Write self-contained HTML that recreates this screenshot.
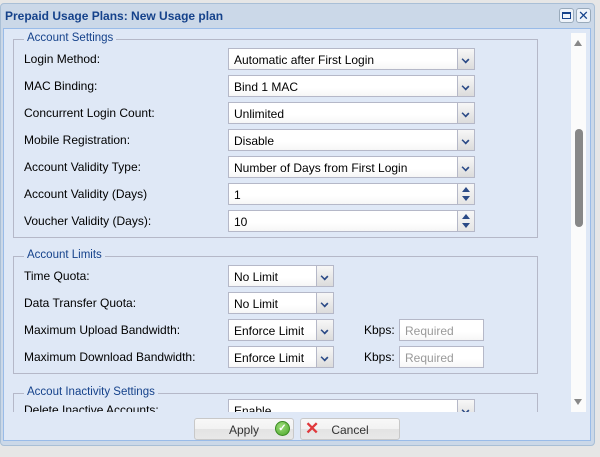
<!DOCTYPE html>
<html><head><style>
*{margin:0;padding:0;box-sizing:border-box}
body{width:600px;height:457px;background:#e6e6e6;font-family:"Liberation Sans",Tahoma,sans-serif;font-size:12px;position:relative;overflow:hidden}
.a{position:absolute}
.win{left:0;top:3px;width:595px;height:443px;background:#cbd8e8;border:1px solid #a9bfd6;border-radius:4px}
.title{left:5px;top:9px;font-weight:bold;color:#15428b;font-size:12px}
.body{left:3px;top:28px;width:588px;height:413px;background:#dfe8f6;border:1px solid #99bbe8}
.fs{border:1px solid #b5b8c8}
.lg{background:#dfe8f6;color:#15428b;padding:0 3px;font-size:11.5px}
.lbl{color:#000;font-size:12px}
.f{height:22px;background:linear-gradient(#fff,#fff 60%,#f6f6f6);border:1px solid #b5b8c8;padding:4px 5px 0;font-size:12px;color:#000}
.tr{position:absolute;right:0;top:0;width:17px;height:20px;background:linear-gradient(#f7f7f7,#dcdcdc);border-left:1px solid #b5b8c8}
.tr:after{content:"";position:absolute;left:4px;top:7px;width:5px;height:5px;border-right:2px solid #2b4a86;border-bottom:2px solid #2b4a86;transform:rotate(45deg) scale(.85,.75)}
.sp{position:absolute;right:0;top:0;width:17px;height:20px;background:linear-gradient(#f7f7f7,#e5e5e5);border-left:1px solid #b5b8c8}
.sp i{position:absolute;left:4px;width:0;height:0;border-left:4px solid transparent;border-right:4px solid transparent}
.ph{color:#999}
.btn{top:418px;height:22px;border:1px solid #c8c8c8;border-radius:3px;background:linear-gradient(#f8f8f8,#f2f2f2 50%,#e3e3e3 51%,#e8e8e8);color:#333;text-align:center;padding-top:4px}
</style></head><body>
<div class="a win"></div>
<div class="a title">Prepaid Usage Plans: New Usage plan</div>
<div class="a" style="left:559px;top:8px;width:15px;height:15px;border:1px solid #9ab;background:#eef3fa;border-radius:3px"><div class="a" style="left:2px;top:3px;width:9px;height:7px;border:1px solid #15428b;border-top-width:2px"></div></div>
<div class="a" style="left:576px;top:8px;width:15px;height:15px;border:1px solid #9ab;background:#eef3fa;border-radius:3px;color:#15428b;font-size:13px;line-height:13px;text-align:center">✕</div>
<div class="a body"></div>
<!-- scrollbar -->
<div class="a" style="left:571px;top:33px;width:15px;height:379px;background:#fbfbfb"></div>
<div class="a" style="left:574px;top:40px;width:0;height:0;border-left:4px solid transparent;border-right:4px solid transparent;border-bottom:6px solid #888"></div>
<div class="a" style="left:575px;top:129px;width:8px;height:98px;background:#888;border-radius:4px"></div>
<div class="a" style="left:574px;top:399px;width:0;height:0;border-left:4px solid transparent;border-right:4px solid transparent;border-top:6px solid #888"></div>
<div class="a" style="left:4px;top:30px;width:566px;height:382px;overflow:hidden">
 <div class="a fs" style="left:9px;top:9px;width:525px;height:199px"></div>
 <div class="a lg" style="left:20px;top:2px">Account Settings</div>
 <div class="a fs" style="left:9px;top:226px;width:525px;height:118px"></div>
 <div class="a lg" style="left:20px;top:219px">Account Limits</div>
 <div class="a fs" style="left:9px;top:363px;width:525px;height:80px"></div>
 <div class="a lg" style="left:20px;top:356px">Accout Inactivity Settings</div>
</div>
<div class="a" style="left:0;top:0;width:571px;height:412px;overflow:hidden">
<div class="a lbl" style="left:24px;top:52px">Login Method:</div>
<div class="a f" style="left:228px;top:48px;width:247px">Automatic after First Login<div class="tr"></div></div>
<div class="a lbl" style="left:24px;top:79px">MAC Binding:</div>
<div class="a f" style="left:228px;top:75px;width:247px">Bind 1 MAC<div class="tr"></div></div>
<div class="a lbl" style="left:24px;top:106px">Concurrent Login Count:</div>
<div class="a f" style="left:228px;top:102px;width:247px">Unlimited<div class="tr"></div></div>
<div class="a lbl" style="left:24px;top:133px">Mobile Registration:</div>
<div class="a f" style="left:228px;top:129px;width:247px">Disable<div class="tr"></div></div>
<div class="a lbl" style="left:24px;top:160px">Account Validity Type:</div>
<div class="a f" style="left:228px;top:156px;width:247px">Number of Days from First Login<div class="tr"></div></div>
<div class="a lbl" style="left:24px;top:187px">Account Validity (Days)</div>
<div class="a f" style="left:228px;top:183px;width:247px">1<div class="sp"><i style="top:3px;border-bottom:5px solid #2b4a86"></i><i style="top:12px;border-top:5px solid #2b4a86"></i></div></div>
<div class="a lbl" style="left:24px;top:214px">Voucher Validity (Days):</div>
<div class="a f" style="left:228px;top:210px;width:247px">10<div class="sp"><i style="top:3px;border-bottom:5px solid #2b4a86"></i><i style="top:12px;border-top:5px solid #2b4a86"></i></div></div>

<div class="a lbl" style="left:24px;top:269px">Time Quota:</div>
<div class="a f" style="left:228px;top:265px;width:106px">No Limit<div class="tr"></div></div>
<div class="a lbl" style="left:24px;top:296px">Data Transfer Quota:</div>
<div class="a f" style="left:228px;top:292px;width:106px">No Limit<div class="tr"></div></div>
<div class="a lbl" style="left:24px;top:323px">Maximum Upload Bandwidth:</div>
<div class="a f" style="left:228px;top:319px;width:106px">Enforce Limit<div class="tr"></div></div>
<div class="a lbl" style="left:364px;top:323px">Kbps:</div>
<div class="a f ph" style="left:399px;top:319px;width:85px">Required</div>
<div class="a lbl" style="left:24px;top:350px">Maximum Download Bandwidth:</div>
<div class="a f" style="left:228px;top:346px;width:106px">Enforce Limit<div class="tr"></div></div>
<div class="a lbl" style="left:364px;top:350px">Kbps:</div>
<div class="a f ph" style="left:399px;top:346px;width:85px">Required</div>

<div class="a lbl" style="left:24px;top:403px">Delete Inactive Accounts:</div>
<div class="a f" style="left:228px;top:399px;width:247px">Enable<div class="tr"></div></div>
</div>
<div class="a" style="left:4px;top:412px;width:566px;height:28px;background:#dfe8f6"></div>
<div class="a btn" style="left:194px;width:100px">Apply
 <div class="a" style="left:80px;top:2px;width:15px;height:15px;border-radius:50%;background:radial-gradient(circle at 40% 35%,#9ede7a,#4aa52a);border:1px solid #3a8a22;color:#fff;font-size:10px;line-height:13px;font-weight:bold">✓</div></div>
<div class="a btn" style="left:300px;width:100px"><span class="a" style="left:4px;top:0px;color:#e0393c;font-size:17px;font-weight:bold">✕</span>Cancel</div>
</body></html>
